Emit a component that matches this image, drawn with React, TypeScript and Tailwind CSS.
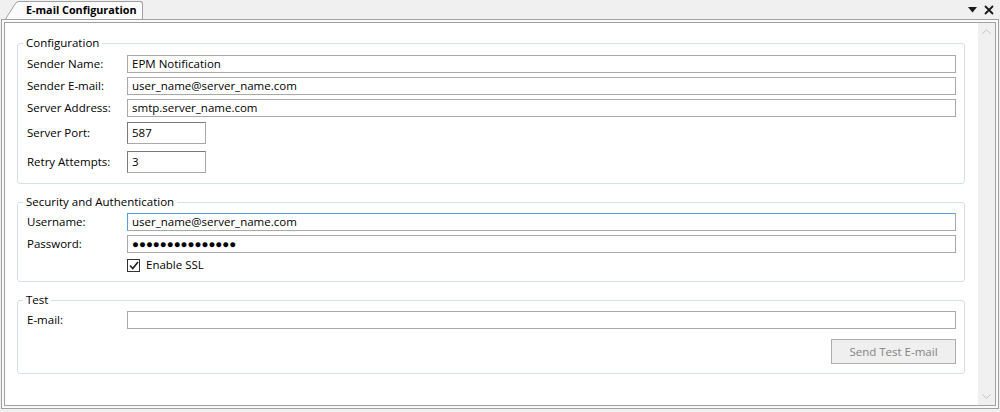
import React from 'react';

const font = { fontFamily: '"Open Sans", "Noto Sans", Arial, sans-serif' };

function Field({ label, value, short, focused }: { label: string; value: string; short?: boolean; focused?: boolean }) {
  return (
    <div className="flex items-center h-[22px]">
      <div className="w-[100px] shrink-0 text-[11.5px] text-black">{label}</div>
      <div
        className={`flex items-center bg-white border px-[4px] text-[11.5px] text-black ${
          short ? 'w-[79px] h-[22px]' : 'flex-1 h-[18px]'
        } ${focused ? 'border-[#a9a9a9] border-l-[#569de5] border-t-[#569de5]' : 'border-[#a9a9a9]'} ${short ? 'border-t-[#7a7a7a] border-l-[#7a7a7a]' : ''}`}
      >
        {value}
      </div>
    </div>
  );
}

function Group({ title, children }: { title: string; children: React.ReactNode }) {
  return (
    <fieldset className="border border-[#d5dfe5] rounded-[3px] pl-[9px] pr-[8px]">
      <legend className="ml-[-4px] px-[3px] text-[11.5px] leading-[16px] text-black">{title}</legend>
      {children}
    </fieldset>
  );
}

export default function App() {
  return (
    <div className="w-[1000px] h-[412px] bg-[#f0f0f0] flex flex-col overflow-hidden" style={font}>
      {/* tab strip */}
      <div className="h-[19px] flex items-end justify-between">
        <div className="ml-[5px] h-[18px] flex">
          <svg width="14" height="18" viewBox="0 0 14 18" className="block shrink-0">
            <path d="M0 18 L10 3 Q12 0.5 14 0.5 L14 18 Z" fill="#fbfbfb" />
            <path d="M0.5 18 L10 3 Q12 0.5 14 0.5" fill="none" stroke="#a0a0a0" />
          </svg>
          <div className="h-[18px] bg-[#fbfbfb] border-t border-r border-[#a0a0a0] rounded-tr-[3px] pl-[7px] pr-[5px] flex items-center text-[10.8px] font-bold text-black">
            E-mail Configuration
          </div>
        </div>
        <div className="flex items-center gap-[7px] mr-[6px] mb-[4px]">
          <svg width="9" height="6" viewBox="0 0 9 6">
            <path d="M0 0 H9 L4.5 5.5 Z" fill="#1a1a1a" />
          </svg>
          <svg width="10" height="10" viewBox="0 0 10 10">
            <path d="M1 1 L9 9 M9 1 L1 9" stroke="#1a1a1a" strokeWidth="1.8" />
          </svg>
        </div>
      </div>

      {/* frame */}
      <div className="mx-[1px] mb-[3px] flex-1 flex border border-[#a0a0a0] bg-[#fafafa] p-[2px]">
        <div className="flex-1 flex border border-[#a0a0a0] bg-white">
          <div className="flex-1 flex flex-col gap-[10px] pt-[12px] pl-[12px] pr-[13px]">
            <Group title="Configuration">
              <div className="flex flex-col pt-[2px] pb-[10px]">
                <Field label="Sender Name:" value="EPM Notification" />
                <Field label="Sender E-mail:" value="user_name@server_name.com" />
                <Field label="Server Address:" value="smtp.server_name.com" />
                <div className="mt-[3px]">
                  <Field label="Server Port:" value="587" short />
                </div>
                <div className="mt-[7px]">
                  <Field label="Retry Attempts:" value="3" short />
                </div>
              </div>
            </Group>
            <Group title="Security and Authentication">
              <div className="flex flex-col pt-[1px] pb-[6px]">
                <Field label="Username:" value="user_name@server_name.com" focused />
                <Field label="Password:" value="●●●●●●●●●●●●●●●" />
                <div className="h-[20px] flex items-center pl-[100px]">
                  <div className="w-[13px] h-[13px] border border-[#333] bg-white flex items-center justify-center">
                    <svg width="10" height="9" viewBox="0 0 10 9">
                      <path d="M1 4.5 L3.8 7.5 L9 1" fill="none" stroke="#222" strokeWidth="1.6" />
                    </svg>
                  </div>
                  <span className="ml-[6px] text-[11.5px] text-black">Enable SSL</span>
                </div>
              </div>
            </Group>
            <Group title="Test">
              <div className="flex flex-col pt-[1px] pb-[9px]">
                <Field label="E-mail:" value="" />
                <div className="flex justify-end mt-[8px]">
                  <div className="w-[125px] h-[25px] border border-[#adadad] bg-[#efefef] flex items-center justify-center text-[11.5px] text-[#838383]">
                    Send Test E-mail
                  </div>
                </div>
              </div>
            </Group>
          </div>
          {/* scrollbar */}
          <div className="w-[17px] bg-[#f0f0f0] flex flex-col justify-between items-center py-[6px]">
            <svg width="9" height="5" viewBox="0 0 9 5">
              <path d="M0.5 4.5 L4.5 0.8 L8.5 4.5" fill="none" stroke="#c2c2c2" />
            </svg>
            <svg width="9" height="5" viewBox="0 0 9 5">
              <path d="M0.5 0.5 L4.5 4.2 L8.5 0.5" fill="none" stroke="#c2c2c2" />
            </svg>
          </div>
        </div>
      </div>
    </div>
  );
}
